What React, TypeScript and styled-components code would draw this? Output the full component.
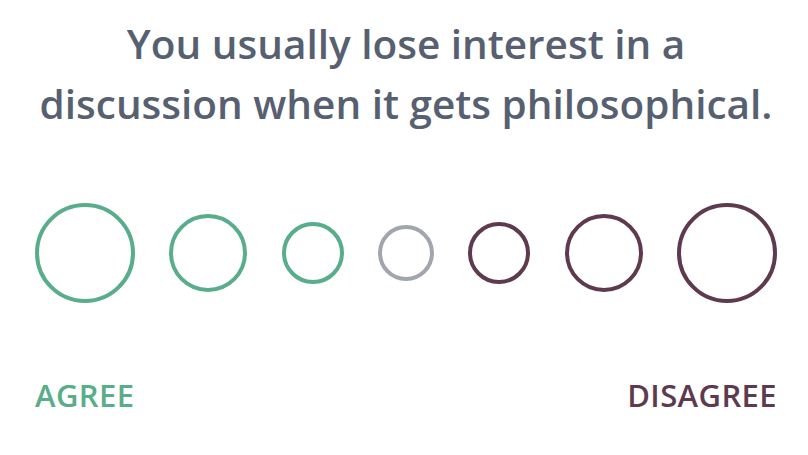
import React from 'react'
import styled, { createGlobalStyle } from 'styled-components'

const GlobalStyle = createGlobalStyle`
  html, body {
    margin: 0;
    padding: 0;
    background: #ffffff;
  }
  body {
    font-family: 'Open Sans', 'Noto Sans', sans-serif;
  }
`

const GREEN = '#58ad8a'
const PURPLE = '#5e3a4f'
const GRAY = '#a1a5ad'

type Option = {
  size: number
  color: string
}

const options: Option[] = [
  { size: 100, color: GREEN },
  { size: 78, color: GREEN },
  { size: 62, color: GREEN },
  { size: 56, color: GRAY },
  { size: 62, color: PURPLE },
  { size: 78, color: PURPLE },
  { size: 100, color: PURPLE },
]

const Page = styled.div`
  width: 808px;
  height: 455px;
  box-sizing: border-box;
  padding: 14px 31px 0 35px;
  display: flex;
  flex-direction: column;
`

const Question = styled.h1`
  margin: 0;
  font-size: 40.5px;
  line-height: 60px;
  font-weight: 600;
  color: #576071;
  text-align: center;
`

const Scale = styled.div`
  margin-top: 69px;
  height: 100px;
  display: flex;
  align-items: center;
  justify-content: space-between;
`

const Circle = styled.button<{ $size: number; $color: string }>`
  width: ${(p) => p.$size}px;
  height: ${(p) => p.$size}px;
  box-sizing: border-box;
  border-radius: 50%;
  border: 4px solid ${(p) => p.$color};
  background: transparent;
  padding: 0;
  cursor: pointer;
`

const Labels = styled.div`
  margin-top: 74px;
  display: flex;
  justify-content: space-between;
`

const Label = styled.span<{ $color: string }>`
  font-size: 31px;
  line-height: 36px;
  letter-spacing: 0.4px;
  font-weight: 600;
  color: ${(p) => p.$color};
`

const App: React.FC = () => (
  <>
    <GlobalStyle />
    <Page>
      <Question>
        You usually lose interest in a
        <br />
        discussion when it gets philosophical.
      </Question>
      <Scale>
        {options.map((o, i) => (
          <Circle key={i} $size={o.size} $color={o.color} aria-label={`option ${i + 1}`} />
        ))}
      </Scale>
      <Labels>
        <Label $color={GREEN}>AGREE</Label>
        <Label $color={PURPLE}>DISAGREE</Label>
      </Labels>
    </Page>
  </>
)

export default App
